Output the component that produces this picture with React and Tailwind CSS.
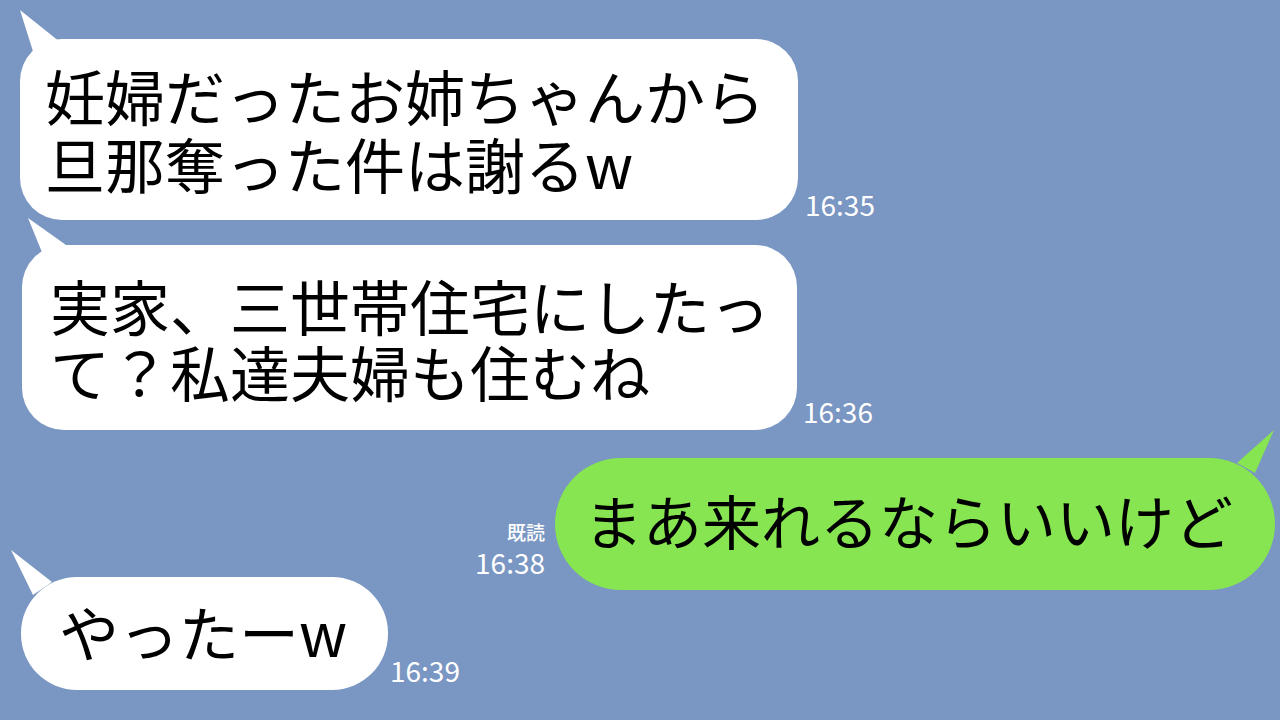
const font = "font-['Noto_Sans_CJK_JP','Noto_Sans',sans-serif]";

const Tail = ({ className, points, fill }) => (
  <svg className={`absolute ${className}`} width="50" height="60" viewBox="0 0 50 60">
    <polygon points={points} fill={fill} />
  </svg>
);

const Time = ({ children, className = "" }) => (
  <div className={`text-[28px] leading-none text-white ${className}`}>{children}</div>
);

export default function App() {
  return (
    <div className={`w-[1280px] h-[720px] overflow-hidden bg-[#7a96c2] flex flex-col ${font}`}>
      {/* message 1 */}
      <div className="flex items-end mt-[39px] ml-[20px]">
        <div className="relative w-[778px] h-[181px] rounded-[42px] bg-white flex flex-col justify-center pl-[25px] pb-[2px] text-[60px] leading-[68px] text-black whitespace-nowrap">
          <Tail className="left-0 top-[-30px]" points="0,1 40,33 16,52" fill="#ffffff" />
          <div className="relative">妊婦だったお姉ちゃんから</div>
          <div className="relative">旦那奪った件は謝るw</div>
        </div>
        <Time className="ml-[7px] mb-[2px]">16:35</Time>
      </div>

      {/* message 2 */}
      <div className="flex items-end mt-[25px] ml-[22px]">
        <div className="relative w-[775px] h-[185px] rounded-[42px] bg-white flex flex-col justify-center pl-[28px] text-[60px] leading-[66px] text-black whitespace-nowrap">
          <Tail className="left-[4px] top-[-28px]" points="2,1 40,28 20,45" fill="#ffffff" />
          <div className="relative">実家、三世帯住宅にしたっ</div>
          <div className="relative">て？私達夫婦も住むね</div>
        </div>
        <Time className="ml-[6px] mb-[5px]">16:36</Time>
      </div>

      {/* message 3 (mine) */}
      <div className="flex items-end justify-end mt-[28px] mr-[5px]">
        <div className="flex flex-col items-end mr-[10px] mb-[14px] text-white">
          <div className="text-[19px] font-medium leading-none mb-[7px]">既読</div>
          <Time>16:38</Time>
        </div>
        <div className="relative w-[720px] h-[132px] rounded-[66px] bg-[#86e550] flex items-center pl-[29px] pb-[10px] text-[59px] leading-none text-black whitespace-nowrap">
          <Tail className="right-0 top-[-29px]" points="49,1 12,34 30,44" fill="#86e550" />
          <span className="relative">まあ来れるならいいけど</span>
        </div>
      </div>

      {/* message 4 */}
      <div className="flex items-end mt-[-13px] ml-[21px]">
        <div className="relative w-[367px] h-[113px] rounded-[56px] bg-white flex items-center pl-[38px] pb-[6px] text-[60px] leading-none text-black whitespace-nowrap">
          <Tail className="left-[-10px] top-[-28px]" points="0,1 41,33 22,46" fill="#ffffff" />
          <span className="relative">やったーw</span>
        </div>
        <Time className="ml-[2px] mb-[6px]">16:39</Time>
      </div>
    </div>
  );
}
